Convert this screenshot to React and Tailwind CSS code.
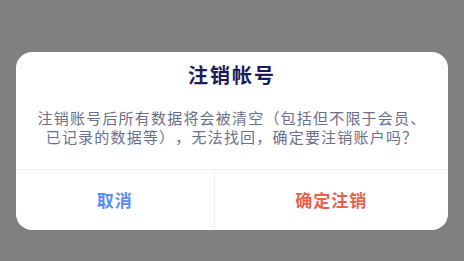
import React from "react";

export default function App() {
  const font = { fontFamily: '"Noto Sans CJK SC", "Noto Sans", sans-serif' };
  return (
    <div className="w-[464px] h-[261px] bg-[#808080] px-4 pt-[52px] [text-spacing-trim:space-all]" style={font}>
      <div className="w-[432px] h-[178px] bg-white rounded-[16px] overflow-hidden flex flex-col">
        <div className="pt-[9px] text-center text-[20px] leading-[28px] font-bold tracking-[2px] text-[#1c1d57]">
          注销帐号
        </div>
        <div className="mt-[19px] px-5 text-center text-[15px] leading-[19px] tracking-[1.2px] text-[#6b6e8a]">
          注销账号后所有数据将会被清空（包括但不限于会员、已记录的数据等），无法找回，确定要注销账户吗？
        </div>
        <div className="mt-auto flex h-[61px] border-t border-[#eeeeee]">
          <button className="flex-auto flex items-center justify-center border-r border-[#eeeeee] text-[17px] font-bold tracking-[1px] text-[#5b8def]">
            取消
          </button>
          <button className="flex-auto flex items-center justify-center text-[17px] font-bold tracking-[1px] text-[#e8614d]">
            确定注销
          </button>
        </div>
      </div>
    </div>
  );
}
